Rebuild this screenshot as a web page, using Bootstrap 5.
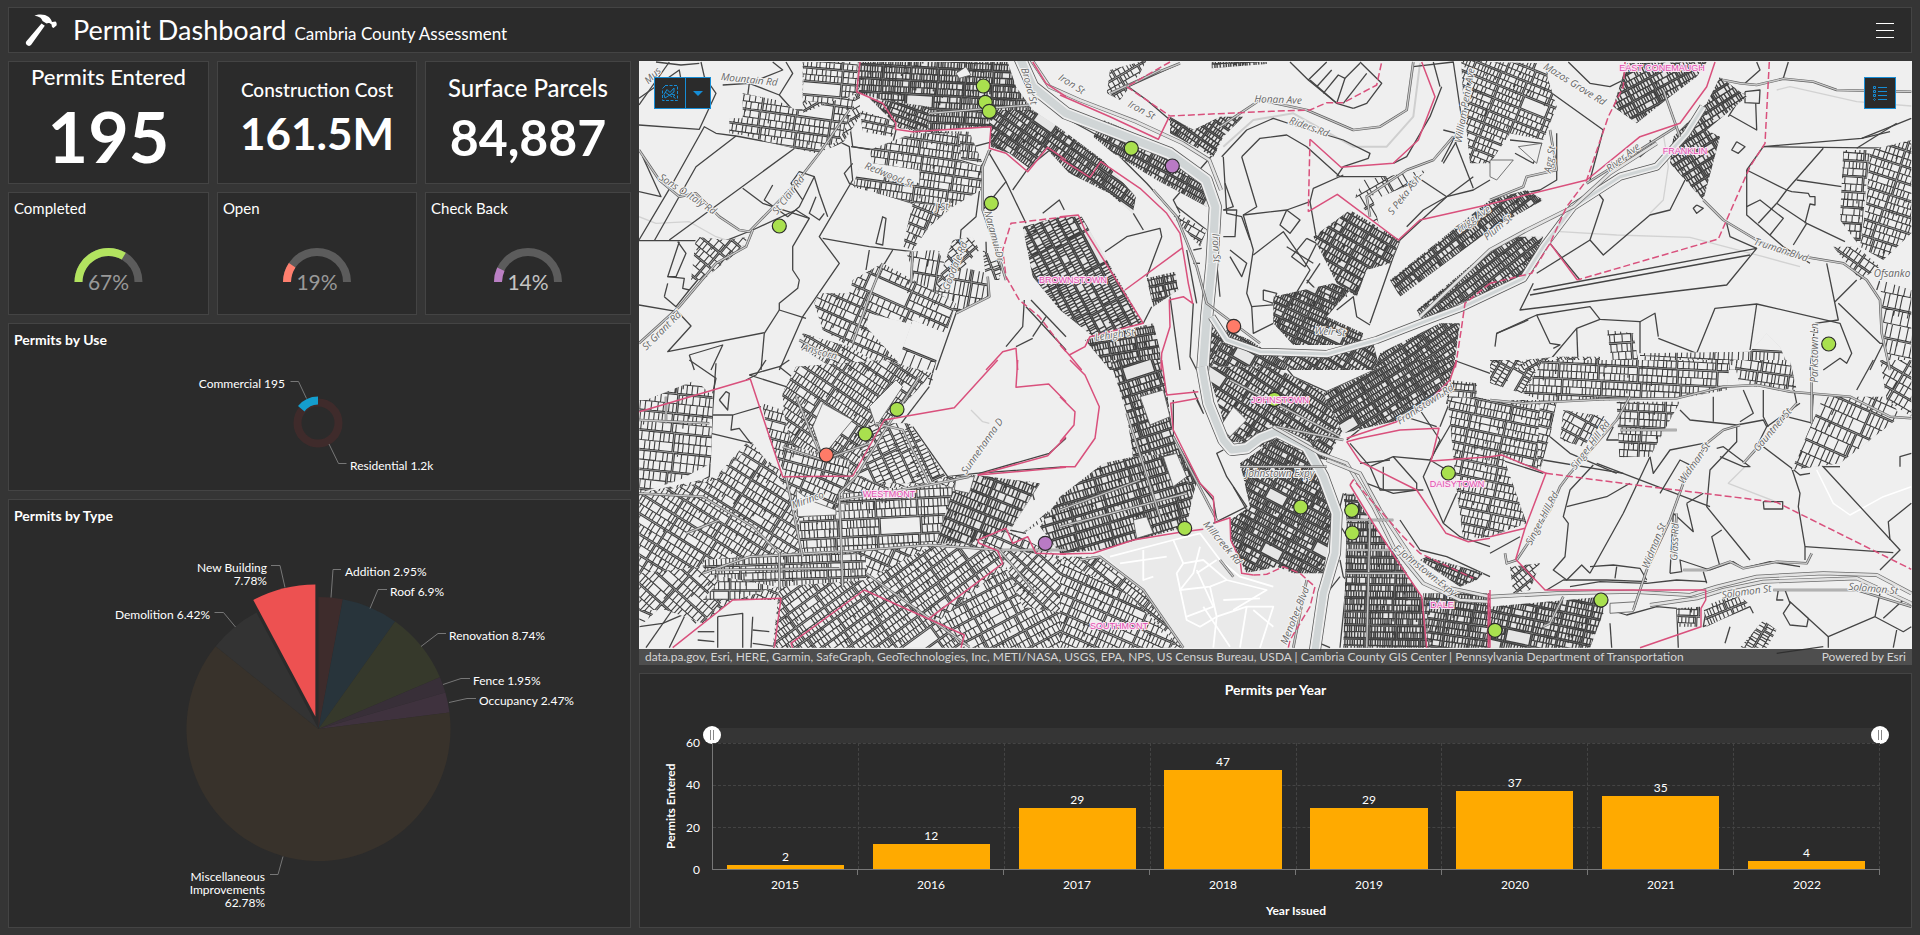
<!DOCTYPE html>
<html lang="en">
<head>
<meta charset="utf-8">
<meta name="viewport" content="width=device-width, initial-scale=1">
<title>Permit Dashboard</title>
<link href="https://cdn.jsdelivr.net/npm/bootstrap@5.3.0/dist/css/bootstrap.min.css" rel="stylesheet">
<style>
  body { background: #353535; color: #fff; font-family: Lato, "Open Sans", sans-serif; font-size: 14px; line-height: 20px; }
  .dash { min-height: 100vh; padding: 7px 8px; gap: 8px; }
  .tile { background: #2b2b2b; border: 1px solid #444; min-width: 0; min-height: 0; }
  .topbar { height: 46px; padding: 0 16px 0 14px; }
  .topbar h1 { font-size: 27px; line-height: 32px; font-weight: 400; }
  .topbar .sub-title { font-size: 17px; line-height: 20px; }
  .menu-btn { color: #fff; width: 20px; height: 20px; }
  .board { display: grid; grid-template-columns: 623fr 1273fr; gap: 8px; }
  .left-col { display: grid; grid-template-columns: 201fr 200fr 206fr; grid-template-rows: 123fr 123fr 168fr 429fr; gap: 8px; min-height: 0; }
  .span-all { grid-column: 1 / -1; }
  .right-col { display: grid; grid-template-rows: 604fr 255fr; gap: 8px; min-width: 0; }
  .tile-title { font-size: 14px; line-height: 20px; height: 30px; padding: 6px 5px 0; margin: 0; font-weight: 700; }
  .tile-title.thin { font-weight: 400; font-size: 15px; padding-top: 5px; }
  .fill-svg { display: block; flex: 1 1 0; min-height: 0; width: 100%; }
  .fill-svg text { font-size: 12px; fill: #fff; }
  .fill-svg .pct { font-size: 21px; }
  .kpi-name { font-weight: 500; }
  .kpi-num { font-weight: 700; }
  .kpi-a { padding-top: 2px; } .kpi-a .kpi-name { font-size: 22px; line-height: 26px; } .kpi-a .kpi-num { font-size: 70px; line-height: 92px; }
  .kpi-b { padding-top: 16px; } .kpi-b .kpi-name { font-size: 19px; line-height: 24px; } .kpi-b .kpi-num { font-size: 44px; line-height: 62px; }
  .kpi-c { padding-top: 12px; } .kpi-c .kpi-name { font-size: 24px; line-height: 28px; } .kpi-c .kpi-num { font-size: 50px; line-height: 70px; }
  .lead-line { fill: none; stroke: #777; stroke-width: 1; }

  .map-tile { border: 0; background: #efefef; overflow: hidden; }
  .map-tile > svg { position: absolute; inset: 0; width: 100%; height: 100%; }
  .map-tools { position: absolute; top: 16px; left: 15px; right: 16px; }
  .tool { background: #2b2b2b; border: 1px solid #168dd6; color: #168dd6; height: 32px; width: 32px; padding: 0; display: flex; align-items: center; justify-content: center; border-radius: 0; }
  .tool.drop { width: 26px; margin-left: -1px; }
  .credits { position: absolute; left: 0; right: 0; bottom: 0; background: rgba(43,43,43,.82); color: #d4d4d4; font-size: 12px; line-height: 16px; padding: 0 6px; white-space: nowrap; }
  .street { font: italic 10px "Open Sans", sans-serif; fill: #666; stroke: #f4f4f4; stroke-width: 2px; paint-order: stroke; text-anchor: middle; }
  .town { font: 9px "Liberation Sans", sans-serif; fill: #e04fae; stroke: #fbe6f4; stroke-width: 2px; paint-order: stroke; text-anchor: middle; }

  .chart-title { padding: 6px 0 4px; font-size: 14px; font-weight: 700; line-height: 20px; margin: 0 0 24px; }
  .plot-grid { display: grid; grid-template-columns: 20px 28px 1fr; grid-template-rows: 15px 1fr 29px; margin: 0 31px 0 24px; flex: 1 1 0; min-height: 0; font-size: 12px; line-height: 14px; }
  .slide-band { grid-column: 3; position: relative; background: #353535; }
  .slide-band input { position: absolute; top: -2px; left: -9px; width: calc(100% + 18px); height: 18px; margin: 0; appearance: none; background: none; pointer-events: none; }
  .slide-band input::-webkit-slider-thumb { appearance: none; pointer-events: auto; width: 18px; height: 18px; border-radius: 50%; border: 0;
    background: linear-gradient(#888,#888) 7px 4px / 1px 10px no-repeat, linear-gradient(#888,#888) 10px 4px / 1px 10px no-repeat, #fff; }
  .y-name { writing-mode: vertical-rl; transform: rotate(180deg); font-weight: 700; text-align: center; font-size: 12px; line-height: 14px; grid-row: 2; }
  .y-ticks { grid-row: 2; margin: -7px 12px -7px 0; text-align: right; display: flex; flex-direction: column; justify-content: space-between; }
  .plot-area { grid-row: 2; grid-column: 3; position: relative; border-left: 1px solid #777; border-bottom: 1px solid #777; }
  .h-lines { position: absolute; inset: 0; display: flex; flex-direction: column; }
  .h-lines i { flex: 1; border-top: 1px dashed #444; }
  .bar-cell { flex: 1 1 0; border-right: 1px dashed #444; display: flex; flex-direction: column; justify-content: flex-end; align-items: center; }
  .bar-cell b { display: block; width: 81%; background: #ffaa00; flex: none; }
  .bar-cell span { line-height: 16px; }
  .year-row { grid-column: 3; }
  .year-row span { flex: 1 1 0; text-align: center; padding-top: 8px; position: relative; }
  .year-row span::after { content: ""; position: absolute; right: 0; top: 0; height: 5px; border-right: 1px solid #777; }
  .x-name { font-size: 12px; font-weight: 700; line-height: 16px; text-align: center; padding: 4px 0 8px 41px; }
</style>
</head>
<body>
<div class="dash d-flex flex-column">
  <header class="tile topbar d-flex align-items-center">
    <svg width="34" height="34" viewBox="0 0 34 34" aria-hidden="true"><path fill="#fff" d="M11.500 2.800C15 .8 22 .8 25.800 4c1.800 1.500 2.700 3.500 3.200 5l3.500-.6c1.200 1 1.500 2.600 1 4L30.500 15c-1.500-.5-2-1.800-1.800-3.200-1.500-2-3.500-2.200-5.200-1.300l-4-2.500C18.500 4.500 15 3.200 11.500 2.800z"/><path fill="#fff" d="M18.500 10.500l3.300 2.300L8.200 31.800c-.8 1.200-2.500 1.500-3.900.5s-1.900-2.600-1.100-3.800z"/></svg>
    <div class="d-flex align-items-baseline gap-2 ms-3">
      <h1 class="m-0">Permit Dashboard</h1><span class="sub-title">Cambria County Assessment</span>
    </div>
    <button class="btn p-0 border-0 menu-btn ms-auto d-flex" aria-label="Menu"><svg width="20" height="20" viewBox="0 0 20 20" stroke="#fff" stroke-width="1"><path d="M1 3.500h18M1 10.500h18M1 17.500h18"/></svg></button>
  </header>

  <main class="board flex-fill">
    <div class="left-col">
      <section class="tile text-center kpi-a"><div class="kpi-name">Permits Entered</div><div class="kpi-num">195</div></section>
      <section class="tile text-center kpi-b"><div class="kpi-name">Construction Cost</div><div class="kpi-num">161.5M</div></section>
      <section class="tile text-center kpi-c"><div class="kpi-name">Surface Parcels</div><div class="kpi-num">84,887</div></section>

      <section class="tile d-flex flex-column"><h2 class="tile-title thin">Completed</h2><svg class="fill-svg gauge" viewBox="-50 -59 100 91" data-value="67" data-color="#b2e35f" data-text="#999"></svg></section>
      <section class="tile d-flex flex-column"><h2 class="tile-title thin">Open</h2><svg class="fill-svg gauge" viewBox="-50 -59 100 91" data-value="19" data-color="#ff7f6e" data-text="#999"></svg></section>
      <section class="tile d-flex flex-column"><h2 class="tile-title thin">Check Back</h2><svg class="fill-svg gauge" viewBox="-50 -59 100 91" data-value="14" data-color="#ba7fc4" data-text="#c4c4c4"></svg></section>

      <section class="tile span-all d-flex flex-column"><h2 class="tile-title">Permits by Use</h2>
        <svg class="fill-svg" viewBox="9 354 621 136">
          <circle cx="318" cy="423" r="20.500" fill="none" stroke="#3f2b2b" stroke-width="8"/>
          <path d="M318 396.500A26 26 0 0 0 298 406L304.500 411.500A17.500 17.500 0 0 1 318 404.500z" fill="#149ece"/>
          <path class="lead-line" d="M290.500 381.500h8l8 17M329 444l9.500 19.500h8"/>
          <text x="285" y="388" text-anchor="end">Commercial 195</text><text x="350" y="470">Residential 1.2k</text>
        </svg></section>

      <section class="tile span-all d-flex flex-column"><h2 class="tile-title">Permits by Type</h2>
        <svg class="fill-svg" viewBox="9 530 621 397">
          <g id="slices"></g>
          <path class="lead-line" d="M271 565.500h9l5 22M341 569.500h-8l-2 28M387 589.500h-9l-8 19M214.500 612.500h9l12 14.500M446 633.500h-8l-17 13M470 678.500h-9l-18 6M476 698.500h-9l-18 4M270 874.500h8l5-18"/>
          <g text-anchor="end"><text x="267" y="572">New Building</text><text x="267" y="585">7.78%</text><text x="210" y="619">Demolition 6.42%</text>
            <text x="265" y="881">Miscellaneous</text><text x="265" y="894">Improvements</text><text x="265" y="907">62.78%</text></g>
          <text x="345" y="576">Addition 2.95%</text><text x="390" y="596">Roof 6.9%</text><text x="449" y="640">Renovation 8.74%</text><text x="473" y="685">Fence 1.95%</text><text x="479" y="705">Occupancy 2.47%</text>
        </svg></section>
    </div>

    <div class="right-col">
      <section class="tile map-tile position-relative" aria-label="Map">
        <svg id="map" viewBox="639 61 1273 604" preserveAspectRatio="xMidYMid slice"></svg>
        <div class="map-tools d-flex">
          <button class="tool" aria-label="Select"><svg width="16" height="16" viewBox="0 0 16 16" fill="none" stroke="currentColor"><path stroke-dasharray="3 1.500" d="M3 .5h12.500v15H.5V4"/><path d="M.5 3.500l3-3M2 9.500l3-5 3 3 4-4.500v4L7 10.500 3 13zM9 9l4 1-2 1.500 2.500 2M3 7l7 5"/></svg></button>
          <button class="tool drop" aria-label="Selection options"><svg width="10" height="5" viewBox="0 0 10 5"><path d="M0 0h10L5 5z" fill="currentColor"/></svg></button>
          <button class="tool ms-auto" aria-label="Legend"><svg width="16" height="17" viewBox="0 0 16 17" fill="none" stroke="currentColor"><path d="M6 2.500h9M6 6.500h9M6 10.500h9M6 14.500h9M1.500 1.500h2v2h-2zM1.500 5.500h2v2h-2zM1.500 9.500h2v2h-2zM1.500 14.500l1-1 1 1-1 1z"/></svg></button>
        </div>
        <div class="credits d-flex justify-content-between"><span>data.pa.gov, Esri, HERE, Garmin, SafeGraph, GeoTechnologies, Inc, METI/NASA, USGS, EPA, NPS, US Census Bureau, USDA | Cambria County GIS Center | Pennsylvania Department of Transportation</span><span>Powered by Esri</span></div>
      </section>

      <section class="tile d-flex flex-column">
        <h2 class="chart-title text-center">Permits per Year</h2>
        <div class="plot-grid">
          <div class="slide-band"><input type="range" aria-label="From year" min="0" max="8" value="0"><input type="range" aria-label="To year" min="0" max="8" value="8"></div>
          <div class="y-name">Permits Entered</div>
          <div class="y-ticks"><span>60</span><span>40</span><span>20</span><span>0</span></div>
          <div class="plot-area"><div class="h-lines"><i></i><i></i><i></i></div><div class="d-flex h-100 position-relative" id="bars"></div></div>
          <div class="year-row d-flex" id="years"></div>
        </div>
        <div class="x-name">Year Issued</div>
      </section>
    </div>
  </main>
</div>

<script src="https://cdn.jsdelivr.net/npm/bootstrap@5.3.0/dist/js/bootstrap.bundle.min.js"></script>
<script>
// ---------- yearly bars ----------
[[2015,2],[2016,12],[2017,29],[2018,47],[2019,29],[2020,37],[2021,35],[2022,4]].forEach(([y,n]) => {
  bars.insertAdjacentHTML('beforeend', `<div class="bar-cell"><span>${n}</span><b style="height:${n/60*100}%"></b></div>`);
  years.insertAdjacentHTML('beforeend', `<span>${y}</span>`);
});
// ---------- gauges ----------
const pt = (r, a, cx = 0, cy = 0) => (cx + r*Math.sin(a)).toFixed(2) + ' ' + (cy - r*Math.cos(a)).toFixed(2);
document.querySelectorAll('.gauge').forEach(g => {
  const a = -Math.PI/2 + Math.PI*g.dataset.value/100;
  g.innerHTML = `<g fill="none" stroke-width="8"><path stroke="#5c5c5c" d="M-30 0A30 30 0 0 1 30 0"/><path stroke="${g.dataset.color}" d="M-30 0A30 30 0 0 1 ${pt(30,a)}"/></g>
    <text class="pct" text-anchor="middle" y="8" style="fill:${g.dataset.text}">${g.dataset.value}%</text>`;
});
// ---------- pie ----------
let turn = 0;
[[2.95,'#3e2c2c'],[6.9,'#28343b'],[8.74,'#36392b'],[1.95,'#382f38'],[2.47,'#3f323e'],[62.78,'#38322b'],[6.42,'#333333'],[7.79,'#ed5151',13]].forEach(([p,c,out=0]) => {
  const a = turn*Math.PI/50, b = (turn+p)*Math.PI/50, m = (a+b)/2; turn += p;
  const cx = 318.5 + out*Math.sin(m), cy = 729 - out*Math.cos(m);
  slices.insertAdjacentHTML('beforeend', `<path fill="${c}" d="M${cx} ${cy}L${pt(132,a,cx,cy)}A132 132 0 ${p>50?1:0} 1 ${pt(132,b,cx,cy)}z"/>`);
});

// ---------- map ----------
// Geometry is stored per survey sheet, in thirds of a map unit from the sheet's origin.
const sheets = { A:[636,50], B:[1060,50], C:[1490,0], D:[636,360], E:[1060,360], F:[1490,360] };
const pts = (s, str) => str.trim().split(/\s+/).map(p => { const [x,y] = p.split(',').map(Number); return [sheets[s][0]+x/3, sheets[s][1]+y/3]; });
const poly = (s, str) => pts(s,str).map(p => p.map(v => v.toFixed(1)).join(',')).join(' ');
let seed = 7; const rnd = () => (seed = (seed*16807) % 2147483647) / 2147483647;
let out = '', defs = '', hoodNo = 0;
const line = (s, str, css) => out += `<polyline fill="none" stroke-linejoin="round" ${css} points="${poly(s,str)}"/>`;

// lots laid in blocks at an angle, clipped to the neighbourhood's outline
function hood(s, str, deg, lotW, lotD, blockL, road = 1.6) {
  const P = pts(s,str), t = deg*Math.PI/180, c = Math.cos(t), n = Math.sin(t), id = 'h' + hoodNo++;
  const Q = P.map(([x,y]) => [x*c + y*n, -x*n + y*c]);
  const x0 = Math.min(...Q.map(q=>q[0])), x1 = Math.max(...Q.map(q=>q[0])), y0 = Math.min(...Q.map(q=>q[1])), y1 = Math.max(...Q.map(q=>q[1]));
  let d = '', f = x => x.toFixed(1);
  for (let y = y0 - 3; y < y1; y += 2*lotD + road) {
    for (let x = x0 - rnd()*6; x < x1; x += blockL + road) {
      d += `M${f(x)} ${f(y)}h${f(blockL)}v${f(2*lotD)}h${f(-blockL)}z`;
      if (rnd() < .03) continue;
      d += `M${f(x)} ${f(y+lotD)}h${f(blockL)}`;
      for (const row of [0,1]) for (let u = lotW*(.6+rnd()*.7); u < blockL-1; u += lotW*(.65+rnd()*(rnd()<.12?2.4:.7)))
        d += `M${f(x+u)} ${f(y+row*lotD)}v${f(lotD*(rnd()<.1?1.5:1))}`;
    }
  }
  const dense = lotW < 3.3;
  defs += `<clipPath id="${id}"><polygon points="${poly(s,str)}"/></clipPath>`;
  out += `<g clip-path="url(#${id})"><polygon points="${poly(s,str)}" fill="#c4c4c4"/><path transform="rotate(${deg})" fill="${dense?'#e6e6e6':'#efefef'}" stroke="#404040" stroke-width="${dense?1.4:1.1}" d="${d}"/></g>`;
}

// sparse parcels
const parcel = 'stroke="#444" stroke-width="1.3"';
const parcels = { A: `9,225 190,238 240,130 205,80 195,36|9,570 110,400 205,230 240,250 300,258 480,292 100,570|55,572 180,350 300,258|9,572 270,572 350,540 480,480 520,505|9,165 100,36|9,145 130,60 135,90|60,36 135,45 190,40|480,292 520,300 610,275 640,290 650,390 550,560 610,640 500,800 430,960|560,565 700,590 830,605 910,605|9,425 75,440 20,320|320,415 380,460 520,505 470,590 470,660 490,690 485,715 430,760 430,780 510,805|430,780 385,850 375,960|385,848 95,905 165,828 125,785 9,765|160,915 260,885 225,960|160,915 175,960|125,575 150,610 120,680 95,680 130,575|95,680 145,685 140,715 160,720|85,740 120,770 160,720 210,660|85,740 95,700|190,570 180,690|410,405 385,450 455,500 490,470 535,380 490,365 465,400 500,450|535,380 550,430 575,500|740,500 720,580 740,585 750,505 738,500|650,340 625,370 640,400 830,460|1060,310 1110,395 1170,520|1110,395 1040,480|1130,420 1180,350 1290,260|1040,350 1020,500 975,540 970,600 1000,620|1050,575 1055,740 960,790 900,960|1165,750 1160,830 1110,890|1190,860 1230,800|1140,890 1190,865|1220,490 1270,450 1285,480|320,250 340,100 440,60 410,36|430,135 470,70 450,36|260,105 340,100 430,135 470,180 550,180 660,70|700,600 690,660|770,600 740,650|645,290 720,300|640,215 650,290 770,310|780,240 765,300|975,245 970,330 1035,350 1065,300|975,300 1070,275|540,440 520,490 550,510 565,490|1185,750 1290,860|1170,770 1290,900`,
 B: `205,110 260,150 330,210 400,240|205,110 360,40|545,320 600,265 680,255 740,290 840,380 980,380 1070,380|545,320 590,470 550,495 580,600 560,730 575,770 580,850 640,820|485,320 560,240 640,205 700,225 850,270 930,310 925,325 850,350 830,380|550,495 680,480 750,455 760,415 850,375|580,615 670,545 750,660 690,760|680,480 660,525 690,550 720,510 680,480|740,565 695,620 735,650 770,580 740,565|750,455 770,570|930,820 1000,620 1020,570 1160,440 1240,420 1290,390|1040,530 1090,480 1160,440|1070,380 1160,440 1240,380|1180,260 1240,415|1060,50 1180,36 1210,240 1150,340|1140,110 1120,36|1150,240 1190,250 1145,335|1145,110 1110,200 1040,320 1000,340|880,175 920,160 965,100 900,36|745,90 830,160 880,175|690,36 745,90 800,36|750,90 830,160|790,130 835,75 855,85 830,160|855,85 900,40|815,60 770,110|850,160 920,70|135,605 200,560 300,535 305,560 260,680|220,490 250,540|10,610 0,520|330,740 360,960|275,770 250,820|490,320 500,490 545,500 570,570|495,400 520,470 490,480|490,480 530,480 525,560 490,560|510,600 560,640 545,680 510,620|470,640 480,740|575,770 690,760|610,720 650,730 640,760 610,750 610,720|690,730 760,800|740,690 790,740|780,640 740,700|350,470 440,540|360,490 340,450 470,300|20,170 10,200 120,260 260,400 350,500 410,540|380,600 410,760|400,600 425,595|400,640 420,640|830,780 880,740 890,800 930,825|840,690 860,740|680,590 760,640|400,760 390,920 410,960`,
 C: `165,265 340,390 300,540|175,190 165,265|235,186 300,250 360,260 400,240|820,440 1115,415 1264,355|820,440 1264,445|1115,415 1200,395|770,510 890,570 860,610 950,670 1065,725|770,510 770,645 880,740 960,790|820,440 770,510|1000,445 890,570 905,575 955,580 960,590 975,590 975,615 960,612 945,670|770,620 810,600 880,655 840,705|805,670 860,610|920,540 1055,560|910,735 950,670|720,345 800,390 797,310|740,425 725,450 745,460 765,440 740,425|765,275 810,270 808,310 765,308 765,275|715,350 760,280|895,186 880,235|765,250 810,210 800,186|130,870 800,745 710,855 90,930 130,850|120,885 780,765|310,560 340,600 300,720 340,765 480,645 540,630 585,540|300,720 140,820|200,680 180,730 270,840|710,670 720,710 800,745|20,1000 140,945 300,920 330,958 450,965 495,940 505,1010|15,1040 20,1000 115,960|140,945 180,1030 210,1035 190,1045|330,958 260,985 180,1080|260,985 265,1110|505,1015 620,1060 675,925 800,912 1050,970 1085,1060 1070,1090 1050,1075 1000,1110|800,912 780,1050|450,965 450,1060|1010,790 1045,960 975,970 960,1110|1045,910 1170,1030 1190,1030|1035,905 1100,840|1170,840 1160,870|1180,1030 1140,1110|620,615 640,625 620,640 610,625 620,615|60,420 155,430 130,490 75,460|200,400 200,540 150,570 50,590|480,420 485,440 450,470 440,450|1100,445 1220,370`,
 D: `160,0 240,55 230,100|390,0 360,45 330,60|240,10 230,150 220,350 200,360|340,45 430,20 480,60|340,45 450,80 440,110|430,20 460,0|230,165 290,165 375,140|290,165 285,210 310,205 375,290|250,120 270,95 280,100 275,150 250,120|225,220 350,250|830,200 935,350 1020,340 1290,320|945,350 960,395 1000,400|880,80 750,250|890,60 740,0|900,0 880,75|1030,340 1240,280 1290,235|1210,370 1120,510 1170,520|480,380 520,420 600,450 600,465 480,470|440,350 480,430 490,470 600,465|1180,365 1195,420|245,770 320,760 320,863|350,770 345,863|185,815 235,815|185,840 235,845|245,770 245,863|350,810 400,815|350,850 420,860|10,800 80,790 150,760 100,863|30,863 130,720|150,760 180,790|1160,520 1290,430|750,60 790,90|695,140 740,190`,
 E: `490,270 470,280 500,350 560,440 460,490|340,120 340,230 420,370 460,420 470,480|410,120 430,160 400,90|260,120 320,180|660,0 700,50 800,95 1000,5|520,380 560,450|1180,0 1290,40|860,240 970,150 1130,200|1080,150 1140,240 1090,350 1150,490|870,250 930,320 960,390 1090,390|970,320 970,390|930,320 1000,290 1110,300|1000,290 1070,370 1070,390 1000,400 920,370|1110,300 1160,330|900,310 990,300|1150,490 1200,530 1290,560|1020,480 1080,570 1160,590 1290,650|1190,400 1150,490|840,600 850,650 860,660 840,863|840,650 800,700 780,850 810,863|850,400 830,480 880,560|1170,90 1160,130 1200,120|1140,200 1180,100|130,600 210,680 370,863|200,620 240,660|60,600 80,640 110,620|1110,300 1180,180`,
 F: `570,150 600,180 740,195 820,180 830,200 930,130|740,195 740,245 660,330 650,440 780,600|680,265 700,260 780,320 760,320 690,290|820,260 905,325 930,400 925,440 945,560 945,600|890,170 970,190|830,200 790,280|905,325 930,345 960,340|990,310 1230,570 1210,590 1170,630|945,560 1210,578|1200,540 1195,485 1264,430|1000,320 1050,320|320,310 660,440|480,290 400,460 300,640|420,370 350,410 230,440|310,315 240,390 220,470 235,490 225,590 190,630 230,660 275,615 300,640|300,620 370,615 450,625 470,660|590,430 640,400|590,430 610,515 550,460 540,640|380,620 375,655|540,640 575,635 570,600 660,630 730,605 760,625 840,605 930,620|695,510 665,530 690,620|640,635 650,670|820,425 878,425 878,447 822,447 820,425|400,340 160,300|510,400 570,300 610,320|480,290 490,340 540,270 640,250|670,110 670,185|760,90 790,160 750,185|820,90 820,170 835,200|910,80 920,130|1150,0 1100,90|970,100 965,190|0,65 100,95|0,290 160,340|360,750 410,765 500,740 560,745 565,863|360,790 365,863|885,690 900,730 880,760 900,795 950,800 955,775 900,725 1015,830 1155,770 1170,700|1015,830 1015,863|1155,770 1240,815 1264,800|1180,775 1240,720|1220,810 1210,863|865,690 860,720 880,720|650,740 640,800 780,740 790,760|720,800 705,850|1000,860 860,880|170,690 220,660 350,660 470,665|240,680 330,665 470,670 560,660 650,665|1230,320 1230,290 1264,280|370,200 350,240 400,240|180,230 240,280 380,340|0,580 90,530` };
// faint minor roads and contours first
const faint = 'stroke="#d2d2d2" stroke-width="1.3"';
line('A','9,500 60,520 160,515 240,560 330,590',faint); line('C','210,695 380,705 600,712 820,770 930,800',faint); line('C','520,400 535,500 520,600 480,640',faint);
line('C','860,270 900,260 1100,305 1264,318',faint); line('B','1080,40 1060,200 980,290 880,290 700,190 580,210 490,290','stroke="#cfcfcf" stroke-width="2"');
line('F','765,320 715,370 870,430',faint); line('F','980,330 1030,430 1080,465 1180,410 1264,380','stroke="#fff" stroke-width="1.5"'); line('D','1005,150 1040,185 1060,190',faint);
for (const s in parcels) parcels[s].split('|').forEach(l => line(s,l,parcel));

[ // wide background quarters, overlaid by the closer ones below
  ['D','10,400 240,350 330,250 450,345 930,350 1020,345 1210,370 1120,515 1290,600 1290,863 980,863 760,720 430,863 430,720 290,720 200,790 120,700 10,800',24,5,8,36],
  ['E','0,590 120,590 250,690 370,863 0,863',38,4.5,8,32], ['E','500,240 640,20 860,190 800,300',33,2.8,6,24],
  ['F','0,0 160,0 160,120 0,70',-60,4,6,26], ['F','0,120 200,125 180,230 150,330 40,290 0,290',14,4.5,7,34],
  ['A','500,36 672,36 672,200 620,280 540,310 520,240 500,180',-30,5,7,34], ['A','830,240 1000,245 1040,340 830,300',6,3.6,7,28],
  ['B','440,820 560,900 700,915 940,880 960,960 430,960',32,2.8,6,22], ['E','1090,700 1290,700 1290,863 1100,863',4,2.8,6,24],
  ['A','505,36 665,36 662,130 590,165 500,150',5,5,6,40],
  ['A','668,36 1115,36 1140,110 1190,180 1060,232 880,240 820,240 780,200 740,150 668,130',3,2.6,6,26],
  ['A','320,130 420,150 500,190 600,150 660,140 640,210 610,270 540,310 430,285 320,255 280,250 280,205 320,205',8,5,7,34],
  ['A','672,180 780,215 770,260 680,245',12,5,6,30], ['A','700,145 880,170 875,240 790,235',20,3,5,26],
  ['A','700,300 830,250 970,250 975,335 1040,350 1035,420 950,470 830,460 650,410 670,350 850,400 850,360 710,340',8,4,7,32],
  ['A','830,460 950,470 880,530 830,600 800,590',22,4,8,26], ['A','1060,180 1190,180 1272,235 1400,330 1500,440 1490,490 1420,430 1300,370 1230,295 1180,355 1120,310 1065,290',35,2.4,6,22],
  ['A','1160,530 1272,500 1337,500 1522,820 1372,860 1272,780 1190,680',62,3,7,36], ['A','810,605 905,600 925,640 1055,670 1050,740 960,790 900,740 830,720 830,660',10,5,14,34],
  ['A','740,640 960,760 930,850 700,790 690,830 790,940 760,960 640,890 560,840 535,760 550,730 640,730 650,690',24,5,8,44],
  ['A','640,890 760,960 600,960 490,890 500,850',30,4,7,40], ['A','830,810 930,850 890,960 780,950',22,8,16,60], ['A','180,560 270,570 340,560 300,610 200,690 165,690',40,6,8,30],
  ['A','950,570 1010,560 1030,600 920,720 900,710',50,5,8,24], ['A','1040,600 1100,640 1090,690 1050,690',70,4,7,24],
  ['B','130,210 270,270 440,370 440,470 290,390 160,310 100,260',28,2.5,5.5,20], ['B','330,200 400,240 480,200 550,200 490,260 460,320 330,250',35,3,5,20],
  ['B','150,60 260,30 240,70 180,150 140,130',-30,4,6,20], ['B','75,870 280,820 300,900 303,960 150,960',-10,2.6,6,26], ['B','260,685 345,665 355,720 280,770',-12,2.8,6,20],
  ['B','870,480 1020,570 990,640 920,660 890,740 830,700 760,560',30,3,6.5,22], ['B','640,740 820,700 870,720 800,800 910,850 900,885 700,885 640,820',25,2.4,5,20],
  ['B','990,690 1290,450 1400,420 1450,450 1290,540 1020,740',-38,2.5,6,26], ['B','1070,780 1240,640 1360,560 1450,560 1390,690 1200,760 1090,815',-38,2.6,6,24],
  ['B','960,910 1140,820 1200,820 1180,960 930,990',-35,2.5,5,22], ['B','500,840 570,870 700,960 450,960',30,2.5,6,20],
  ['B','350,490 440,540 420,590 340,500',30,5,7,20], ['B','910,390 1100,360 1060,400 940,450 960,540 930,500 885,440',-30,8,14,40], ['B','455,36 620,36 620,42 455,55',-3,2.5,5,30],
  ['C','-90,120 0,186 160,190 200,320 160,420 60,400 0,490 -60,490 -80,300',22,4,6,26], ['C','410,190 650,186 620,230 540,290 440,370 370,320',-28,3,6,24],
  ['C','690,230 770,290 650,390 690,410 640,600 540,490 550,410 650,310',-32,3,6,24], ['C','1060,450 1140,450 1110,740 1050,660',4,4.5,7,26],
  ['C','1140,450 1264,420 1264,700 1180,780 1110,740 1130,600',18,4.5,7,34], ['C','1030,740 1100,740 1170,800 1110,840',35,5,8,30], ['C','1170,840 1264,870 1264,1110 1190,1110',12,7,14,60],
  ['C','350,990 430,1000 450,1110 370,1110',-4,6,8,26], ['C','450,1060 780,1055 830,1000 870,1040 900,1110 450,1110',3,5,10,36], ['C','100,1080 200,1070 330,1070 330,1110 80,1110',-30,4,6,26],
  ['F','-130,90 0,120 150,120 140,330 40,290 110,490 0,530 -80,540 -100,390',12,4.2,7,34], ['F','160,0 720,0 710,90 570,115 380,120 160,125 100,100',3,4.6,7,38], ['F','380,125 570,125 480,290 388,292',3,4.5,7,26],
  ['F','220,150 350,170 280,260 210,240',28,4.5,8,30], ['F','1000,110 1200,110 1230,170 1050,310 905,330',24,6,12,50], ['F','1170,0 1264,0 1264,170 1190,120',30,6,9,30], ['F','730,0 900,0 920,90 750,75',8,4.5,9,30],
  ['F','0,740 340,710 340,760 300,863 0,863',12,3,6,24], ['F','560,745 630,740 630,800 565,800',2,4,6,22], ['F','640,740 740,700 780,735 650,800',-22,4,7,30], ['F','820,780 860,810 830,863 750,863',-60,4,7,26], ['F','60,620 150,610 120,690 70,700',-40,4,6,24],
  ['D','30,120 180,60 230,110 225,310 130,360 10,400 10,120',6,5.5,9,40], ['D','10,405 240,360 350,250 420,340 480,440 490,575 340,590 200,640 10,640',32,4.8,8,44],
  ['D','480,20 740,0 890,40 760,180 650,350 450,320 440,100',34,3.4,8,44], ['D','378,130 440,150 470,260 640,300 640,350 450,350 400,240',15,4.4,8,40], ['D','700,190 820,190 930,350 880,370 720,370 660,340',65,4,8,40],
  ['D','600,460 620,400 900,370 1010,400 950,550 620,575 490,575 490,475',-3,4.2,8,40], ['D','1020,345 1210,370 1120,510 1000,550 900,550 950,390',22,3.2,8,40],
  ['D','200,600 620,570 690,590 690,660 430,680 200,690',-2,3.8,7,42], ['D','10,640 200,620 280,700 200,790 90,750 10,750',42,5,9,40], ['D','260,650 420,680 300,720 200,720',0,5,8,30],
  ['D','430,680 690,660 880,560 1080,570 1100,610 880,770 990,830 980,863 410,863',-36,4,7,34], ['D','900,790 1100,620 1200,690 1290,700 1290,863 990,863',-28,4.4,8,38],
  ['D','1090,570 1190,580 1290,600 1290,760 1160,740',42,5,8,36], ['D','1160,520 1290,445 1290,420 1240,450',-25,4,8,30],
  ['E','150,0 300,0 320,90 340,230 410,370 370,500 240,470 215,260 200,160',-18,3,6.5,30], ['E','-60,500 0,410 130,310 220,290 340,280 400,400 380,500 120,570 0,580',-17,3.1,7,34],
  ['E','440,20 640,20 800,100 860,190 740,255 650,200 570,230 510,250',33,3,6.5,24], ['E','790,100 1010,0 1190,0 1160,80 1020,180 850,220',-32,2.3,5.5,22],
  ['E','540,310 650,235 740,280 790,390 820,460 790,640 700,640 650,620 560,640 510,540 510,480 570,440',28,2.4,5.5,20], ['E','860,480 930,480 1010,590 1090,720 1100,863 850,863',1,2.5,6,26],
  ['E','1100,720 1290,730 1290,863 1105,863',8,2.6,6,24], ['E','0,595 80,640 200,700 350,850 330,863 0,863',24,4.4,8,34], ['E','1100,590 1270,640 1250,660 1200,680 1080,600',22,2.6,5,22], ['E','850,400 880,400 930,480 860,480',5,3,5,20],
  ['E','1170,60 1250,70 1250,110 1160,115',5,3.500,6,26]
].forEach(h => hood(...h));
// open grounds inside the blocks
[['D','560,130 650,180 600,240 560,290 530,200'],['D','700,140 780,60 800,80 720,200'],['D','480,390 520,420 600,450 600,465 485,470'],['D','960,350 1015,350 1000,400 955,390'],['E','240,110 310,90 330,170 270,195'],['E','310,290 350,280 380,350 340,380'],['A','960,70 990,50 1005,75 970,85'],['E','480,200 520,140 560,180 510,230'],['E','220,480 260,470 280,520 230,535'],['F','360,730 440,725 430,755 360,760'],['C','0,480 70,480 20,540 0,530'],['C','85,440 155,430 140,490']]
  .forEach(([s,p]) => out += `<polygon points="${poly(s,p)}" fill="#efefef" stroke="#555" stroke-width=".8"/>`);
// cemetery
out += `<polygon fill="#eaeaea" points="${poly('E','125,580 220,545 370,520 440,495 500,560 540,640 660,625 720,650 740,720 670,863 370,863 250,690')}"/>`;
'150,590 340,540 420,520 480,600 540,650 640,680|340,540 370,610 350,640 380,780 420,800 470,770 560,740 640,740 600,863|250,570 250,660 280,650|370,610 430,600 500,660 620,690 520,750|180,610 320,590|420,560 400,640 360,690 450,680 500,660|450,680 470,770 460,863|410,630 460,740 380,770|560,740 540,863|490,720 600,715|470,600 410,640|430,740 510,860|580,750 640,800'.split('|').forEach(l => line('E',l,'stroke="#fff" stroke-width="1.8"'));

// rivers and the roads that follow them
const bed = [['A','1150,20 1190,110 1290,190 1420,240 1600,310 1710,390 1738,470 1728,640 1712,800 1700,960',10],['E','425,20 445,130 490,240 515,270 560,265 600,235 650,215 740,260 790,350 830,460 825,580 790,700 765,870',9],
  ['B','455,800 500,870 600,905 800,912 950,870 1080,820 1200,775 1390,685 1450,590 1540,470 1680,380 1790,350 1880,250 1930,170',5]];
bed.forEach(([s,l,w]) => { line(s,l,`stroke="#555" stroke-width="${w+3}"`); line(s,l,`stroke="#eee" stroke-width="${w+1.500}"`); line(s,l,`stroke="#d0d5d6" stroke-width="${w-2}"`); });
[['A','1180,20 1240,110 1330,150 1500,215 1640,280 1720,330 1755,420'],['B','1080,800 1290,600 1400,540 1540,470 1650,370 1790,280'],['E','640,200 780,280 860,310 940,440 1000,560 1090,670 1200,720 1290,725'],['E','800,300 900,340 960,450 1060,600 1150,680 1290,710'],['F','0,710 200,700 430,695 600,705 680,680 800,650 1000,640 1160,645 1264,700'],['F','480,735 620,715 700,690 820,665 1100,655 1264,730']]
  .forEach(([s,l]) => { line(s,l,'stroke="#6a6a6a" stroke-width="4"'); line(s,l,'stroke="#e2e2e2" stroke-width="2.600"'); });
const roads = { A:'9,300 70,390 130,440 180,430 250,500 310,540 340,545 480,400 550,310 640,180|9,880 130,770 240,640 330,590 350,540|650,880 700,740 740,640|830,605 825,700|1060,300 1040,350 1040,480 1085,610 1110,690|880,190 1180,165|490,870 600,930|960,790 1060,740 1055,680', B:'1060,36 1040,180 960,230 880,240 740,180 600,150 480,230|150,130 260,80 360,40|930,500 920,440 1040,360 1120,330 1180,260|280,420 350,500 410,650 440,760 600,880|300,60 200,110', C:'0,600 100,560 110,530 200,510 180,390|700,240 750,250 800,255 880,236 970,245 1040,270 1264,275|640,600 700,660 800,720 880,760 1060,790 1130,840 1170,900 1175,1000 1200,1110|290,550 560,380|520,270 570,410', D:'0,400 200,410 350,500 430,580|90,190 90,110|10,180 220,190|200,640 340,590 620,575 880,555 1090,570 1290,570|620,680 610,400 660,350 760,190 850,50|240,630 610,625|610,420 880,375 1000,350|430,690 430,580|880,370 800,210 720,190|440,260 560,300 700,250|450,350 500,590|1090,570 1200,700|690,640 1000,860|150,520 250,480|480,110 560,300', E:'60,600 120,590 250,690 370,863|0,450 240,360|340,230 470,480|480,600 520,650|0,500 380,400|200,160 300,470|540,320 800,320|860,480 1000,480|860,570 1010,570|930,480 920,863|860,640 1040,640|1020,170 1180,90|740,660 700,863|650,200 850,240|510,60 840,230', F:'0,120 100,130 340,118 560,115 700,80 800,75 900,95 1080,110 1200,170 1264,175|420,110 380,180 240,340 210,380 180,450 80,600 50,610 45,580|750,195 700,210 650,250 580,370 540,480 470,630 430,750|560,460 550,600|920,130 760,310|965,0 965,190|580,630 650,630 720,605 760,625 860,605 950,610 965,580|850,690 960,690 1100,690 1264,740|220,710 180,790 160,800|390,210 560,210' };
for (const s in roads) roads[s].split('|').forEach(l => { line(s,l,'stroke="#606060" stroke-width="2.600"'); line(s,l,'stroke="#cbcbcb" stroke-width="1.300"'); });

// municipal boundaries
const solid = { A:'672,36 662,125 740,160 780,220 778,238 830,245 1065,230 1060,295 1110,310 1175,365 1235,292 1290,330|1190,36 1230,100 1290,140|1050,960 1100,905 1140,895 1145,960', B:'0,135 150,200 295,268 328,200|0,325 90,382 122,335 240,415 320,490 360,550 372,620 385,700 398,760 370,740 328,750 330,830 305,910 303,960|195,720 368,593|0,500 55,495 75,540 250,820 90,860 75,890 28,915 65,960|0,885 28,915|750,268 843,352 1000,340 1075,270 1125,140 1085,36|745,485 832,433 1015,570 1080,510 1290,463', C:'0,612 290,540 450,410 570,370 650,260 675,186|180,730 262,840', D:'10,155 343,57 440,350 650,348 745,180 955,143 1085,0|1145,0 1140,82 1238,72 1290,125|1025,345 1235,287 1290,230|1025,345 1290,322|110,863 290,720 435,715 415,863|470,863 465,850 685,690 985,825 975,863|880,775 1100,610 1085,572 1030,550 1025,540 1110,505 1130,550 1175,530 1200,580 1290,583', E:'30,0 75,45 118,140 105,235 45,320 0,320|0,110 45,155 42,195 0,245|305,0 320,105 415,95|415,115 332,130 340,210 370,270 420,370 460,410 465,488 510,473 512,540 540,600 545,640 580,645|0,582 100,580 220,540 370,515 430,508|860,235 1010,185 1100,130 1170,60 1190,0|860,245 900,235 1020,210 1137,205 1113,303 1290,290|860,245 900,305 1070,390 1158,520 1225,545 1290,535|870,375 940,490 1010,600 1085,710 1100,863|1285,700 1285,863', F:'0,290 35,285 168,340 105,505 0,530|105,505 77,598 165,690 647,690 647,720 633,745 633,800 450,863|0,690 0,863' };
const dashed = { A:'1290,500 1125,520 1100,600 1110,680 1150,750 1210,800 1290,905', B:'330,36 200,110 330,198 600,185 750,180 800,158 850,158 950,105 965,36|750,268 745,485|1290,700 1215,760 1205,830 1185,960', C:'405,186 400,260 355,350 290,540 230,620 180,730 125,820 0,850|838,186 825,430 780,500 685,717 262,840', E:'580,645 620,643 670,620 720,640 765,680 750,740 690,840 685,863|870,375 880,360 950,440 1030,530 1080,580 1240,655', F:'168,340 460,378 640,400 860,427 1264,628' };
const pink = 'stroke="#d9507c" stroke-width="1.500"';
for (const s in solid) solid[s].split('|').forEach(l => line(s,l,pink));
for (const s in dashed) dashed[s].split('|').forEach(l => line(s,l,pink + ' stroke-dasharray="7 3"'));

// labels
const label = (s,x,y,deg,t,cls='street') => { x = sheets[s][0]+x/3; y = sheets[s][1]+y/3; out += `<text class="${cls}" x="${x.toFixed()}" y="${y.toFixed()}" transform="rotate(${deg} ${x.toFixed()} ${y.toFixed()})">${t}</text>`; };
[['A',58,84,-45,'Mus'],['A',340,100,6,'Mountain Rd'],['A',150,440,33,'Sons O Italy Rd'],['A',465,440,-52,'St Clair Rd'],['A',755,385,22,'Redwood St'],['A',918,480,-5,'J St'],['A',1065,560,75,'Naramui Dr'],['A',965,650,-68,'Goodale Rd'],['A',84,850,-45,'St Grant Rd'],['A',548,915,15,'Anscorn'],
 ['A',1170,112,75,'Broad St'],['B',30,110,32,'Iron St'],['B',240,190,28,'Iron St'],['B',655,158,2,'Honan Ave'],['B',745,240,20,'Riders Rd'],['B',460,595,87,'Iron St'],['B',165,865,-8,'Lehigh St'],['B',810,855,5,'Weir St'],['B',1040,440,-52,'S Peka Ash'],['B',1225,168,-80,'William Penn Ave'],['B',1245,515,-35,'Trigg Ave'],
 ['C',250,260,32,'Mazos Grove Rd'],['C',190,480,-80,'Agg St'],['C',405,480,-38,'River Ave'],['C',30,690,-40,'Plum St'],['C',870,760,18,'Truman Blvd'],['C',1205,830,0,'Ofsanko'],['C',983,1060,-90,'Parkstown Ln'],
 ['D',520,428,-20,'Mirinco'],['D',1048,265,-55,'Sunnehanna D'],['E',660,352,0,'Johnstown Expy'],['E',480,555,50,'Millcreek Rd'],['E',715,770,-68,'Menoher Blvd'],['E',1090,640,38,'E Johnstown Expy'],['E',1100,140,-33,'Frankstown Rd'],
 ['F',310,260,-53,'Singer Hill Rd'],['F',165,480,-62,'Singer Hill Rd'],['F',620,315,-55,'Widman St'],['F',500,560,-68,'Widman St'],['F',565,545,-88,'Glass Rd'],['F',855,215,-50,'Gauntner St'],['F',770,705,-8,'Solomon St'],['F',1150,695,5,'Solomon St']].forEach(l => label(...l));
[['A',1310,700,0,'BROWNSTOWN'],['C',515,212,0,'EAST CONEMAUGH'],['C',585,462,0,'FRANKLIN'],['D',760,412,0,'WESTMONT'],['E',177,806,0,'SOUTHMONT'],['E',1145,745,0,'DALE'],['E',1190,382,0,'DAISYTOWN']].forEach(l => label(...l,'town'));
const green = '#a9e04e', coral = '#ff7b68', violet = '#b97ac4';
[['A',1042,108],['A',1048,157],['A',1060,184],['A',430,528],['A',1066,460],['B',214,295],['B',337,348,violet],['B',521,829,coral],['C',1016,1032],['D',783,148],['D',688,222],['D',571,285,coral],['D',1228,550,violet],['E',643,118],['E',374,505],['E',722,441],['E',875,451],['E',877,519],['E',1165,339],['F',333,720],['F',15,811]]
  .forEach(([s,x,y,c=green]) => out += `<circle cx="${(sheets[s][0]+x/3).toFixed(1)}" cy="${(sheets[s][1]+y/3).toFixed(1)}" r="7" fill="${c}" stroke="#2b2b2b" stroke-width="1.200"/>`);
label('E',660,128,0,'JOHNSTOWN','town');
map.innerHTML = `<defs>${defs}</defs>${out}`;
</script>
</body>
</html>
